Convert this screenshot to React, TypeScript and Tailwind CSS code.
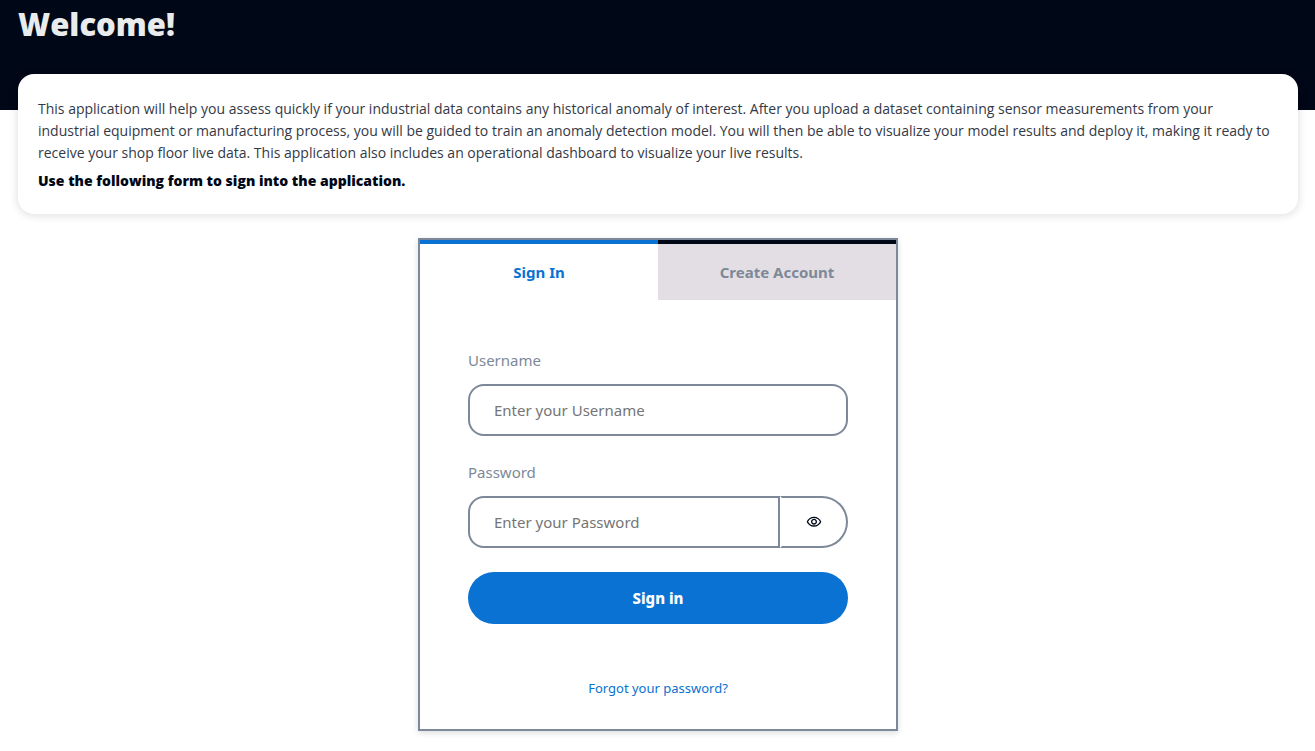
import { useState } from "react";
import { MdOutlineVisibility } from "react-icons/md";

export default function App() {
  const [shown, setShown] = useState(false);
  return (
    <div className="min-h-screen bg-white font-['Open_Sans',sans-serif] text-[#000716]">
      <header className="h-[110px] bg-[#000716] px-[18px] pt-1">
        <h1 className="text-[31px] leading-10 font-extrabold text-[#e9ebed]">Welcome!</h1>
      </header>
      <main className="pr-[17px] pl-[18px]">
        <section className="relative -mt-9 rounded-2xl bg-white px-5 pt-6 pb-[22px] text-sm leading-[22px] shadow-[0_1px_8px_1px_rgba(0,7,22,0.12)]">
          <p className="text-[#343946]">
            This application will help you assess quickly if your industrial data contains any historical anomaly of interest. After you upload a dataset containing sensor measurements from your industrial equipment or manufacturing process, you will be guided to train an anomaly detection model. You will then be able to visualize your model results and deploy it, making it ready to receive your shop floor live data. This application also includes an operational dashboard to visualize your live results.
          </p>
          <p className="mt-[6px] font-extrabold">Use the following form to sign into the application.</p>
        </section>
        <section className="mx-auto mt-6 w-full max-w-[480px] border-2 border-[#7d8998] bg-white font-['Noto_Sans',sans-serif] shadow-[0_2px_6px_rgba(13,26,38,0.15)]">
          <div role="tablist" className="grid grid-cols-2 text-[15px] leading-6 font-bold">
            <button role="tab" aria-selected="true" className="border-t-4 border-[#0972d3] bg-white py-4 text-[#0972d3]">Sign In</button>
            <button role="tab" aria-selected="false" className="border-t-4 border-[#000716] bg-[#e3dee3] py-4 text-[#7d8998]">Create Account</button>
          </div>
          <form className="flex flex-col gap-6 p-12 pb-8 text-[15px] leading-6" onSubmit={(e) => e.preventDefault()}>
            <div className="flex flex-col gap-3">
              <label htmlFor="username" className="text-[#7d8998]">Username</label>
              <input id="username" placeholder="Enter your Username" className="w-full rounded-2xl border-2 border-[#7d8998] px-6 py-3 placeholder:text-[#757575]" />
            </div>
            <div className="flex flex-col gap-3">
              <label htmlFor="password" className="text-[#7d8998]">Password</label>
              <div className="flex">
                <input id="password" type={shown ? "text" : "password"} placeholder="Enter your Password" className="min-w-0 flex-1 rounded-l-2xl border-2 border-[#7d8998] px-6 py-3 placeholder:text-[#757575]" />
                <button type="button" aria-label="Show password" onClick={() => setShown(!shown)} className="flex w-[68px] items-center justify-center rounded-r-full border-2 border-[#7d8998] border-l-transparent">
                  <MdOutlineVisibility size={16} />
                </button>
              </div>
            </div>
            <button type="submit" className="rounded-full bg-[#0972d3] py-[14px] font-extrabold text-white">Sign in</button>
          </form>
          <div className="px-8 pt-[22px] pb-[31px] text-center text-[13px] leading-5">
            <a href="#forgot" className="text-[#0972d3]">Forgot your password?</a>
          </div>
        </section>
      </main>
    </div>
  );
}
